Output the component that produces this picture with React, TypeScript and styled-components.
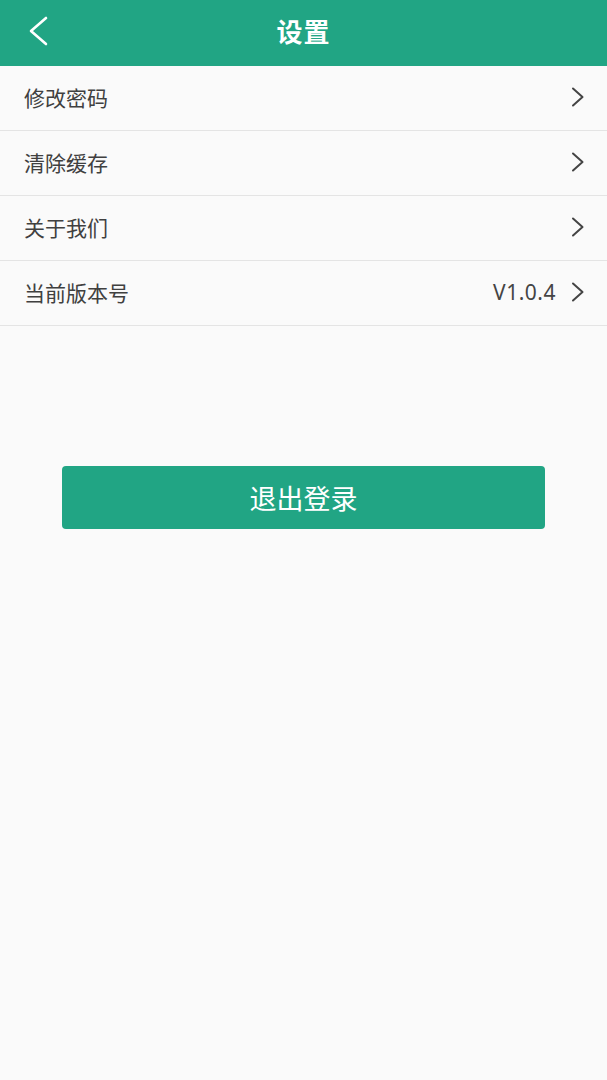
import React from 'react';
import styled, { createGlobalStyle } from 'styled-components';

const GlobalStyle = createGlobalStyle`
  html, body {
    margin: 0;
    padding: 0;
    background: #fafafa;
    font-family: "Noto Sans CJK SC", "Noto Sans", Roboto, sans-serif;
  }
`;

const Page = styled.div`
  width: 607px;
  min-height: 1080px;
  background: #fafafa;
  display: flex;
  flex-direction: column;
`;

const Header = styled.header`
  height: 66px;
  background: #21a584;
  display: grid;
  grid-template-columns: 80px 1fr 80px;
  align-items: center;
`;

const BackButton = styled.button`
  border: 0;
  background: none;
  padding: 0 0 4px 28px;
  height: 66px;
  display: flex;
  align-items: center;
  cursor: pointer;
`;

const Title = styled.h1`
  margin: 0 0 4px;
  line-height: 1;
  text-align: center;
  color: #fff;
  font-size: 26px;
  font-weight: 700;
  letter-spacing: 1px;
`;

const List = styled.ul`
  list-style: none;
  margin: 0;
  padding: 0;
`;

const Row = styled.li`
  height: 64px;
  box-sizing: border-box;
  height: 65px;
  padding: 0 22px 3px 24px;
  border-bottom: 1px solid #e4e4e4;
  display: flex;
  align-items: center;
`;

const Label = styled.span`
  flex: 1;
  font-size: 21px;
  color: #404040;
`;

const Value = styled.span`
  font-size: 21px;
  color: #444;
  margin-right: 15px;
  letter-spacing: 0.5px;
  font-family: "Noto Sans", Roboto, sans-serif;
`;

const Logout = styled.button`
  align-self: center;
  margin-top: 140px;
  width: 483px;
  height: 63px;
  border: 0;
  border-radius: 4px;
  background: #21a584;
  color: #fff;
  font-family: "Noto Sans CJK SC", sans-serif;
  font-size: 27px;
  cursor: pointer;
`;

const Chevron = () => (
  <svg width="14" height="20" viewBox="0 0 14 20" fill="none">
    <path d="M2 1.5L11.5 10L2 18.5" stroke="#444" strokeWidth="2" strokeLinecap="round" strokeLinejoin="round" />
  </svg>
);

const BackIcon = () => (
  <svg width="20" height="30" viewBox="0 0 20 30" fill="none">
    <path d="M18 2L3 15L18 28" stroke="#fff" strokeWidth="2.6" strokeLinecap="round" strokeLinejoin="round" />
  </svg>
);

const items: { label: string; value?: string }[] = [
  { label: '修改密码' },
  { label: '清除缓存' },
  { label: '关于我们' },
  { label: '当前版本号', value: 'V1.0.4' },
];

export default function App() {
  return (
    <Page>
      <GlobalStyle />
      <Header>
        <BackButton aria-label="返回">
          <BackIcon />
        </BackButton>
        <Title>设置</Title>
        <span />
      </Header>
      <List>
        {items.map((it) => (
          <Row key={it.label}>
            <Label>{it.label}</Label>
            {it.value && <Value>{it.value}</Value>}
            <Chevron />
          </Row>
        ))}
      </List>
      <Logout>退出登录</Logout>
    </Page>
  );
}
